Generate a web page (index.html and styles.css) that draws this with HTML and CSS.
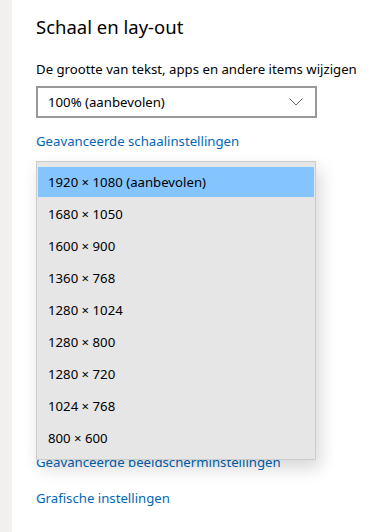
FILE: index.html
```html
<!DOCTYPE html>
<html lang="nl">
<head>
  <meta charset="UTF-8" />
  <meta name="viewport" content="width=device-width,initial-scale=1.0"/>
  <title>Beeldscherm</title>
  <link rel="stylesheet" href="styles.css">
</head>
<body>
  <div class="sidebar"></div>
  <div class="content">
    <h1>Schaal en lay-out</h1>
    <div class="field">
      <label>De grootte van tekst, apps en andere items wijzigen</label>
      <div class="select">
        <span>100% (aanbevolen)</span>
        <svg class="chevron" width="14" height="8" viewBox="0 0 14 8">
          <path d="M0.5 0.5 L7 7 L13.5 0.5" fill="none" stroke="#666" stroke-width="1"/>
        </svg>
      </div>
    </div>
    <a class="link" href="#">Geavanceerde schaalinstellingen</a>

    <!-- resolution dropdown is open, covering its label and box -->
    <div class="resolution">
      <div class="popup">
        <div class="item selected">1920 × 1080 (aanbevolen)</div>
        <div class="item">1680 × 1050</div>
        <div class="item">1600 × 900</div>
        <div class="item">1360 × 768</div>
        <div class="item">1280 × 1024</div>
        <div class="item">1280 × 800</div>
        <div class="item">1280 × 720</div>
        <div class="item">1024 × 768</div>
        <div class="item">800 × 600</div>
      </div>
    </div>

    <a class="link" href="#">Geavanceerde beeldscherminstellingen</a>
    <a class="link" href="#">Grafische instellingen</a>
  </div>
</body>
</html>
```

FILE: styles.css
```css
body {
  margin: 0;
  display: flex;
  min-height: 532px;
  font-family: "Noto Sans", sans-serif;
  background: #fff;
  color: #000;
}
.sidebar {
  width: 12px;
  background: #f2f0ef;
  flex-shrink: 0;
}
.content {
  padding: 13px 0 0 24px;
  display: flex;
  flex-direction: column;
  align-items: flex-start;
}
h1 {
  font-size: 18.5px;
  font-weight: normal;
  margin: 0 0 18px 0;
  line-height: 28px;
}
label {
  display: block;
  font-size: 13.2px;
  line-height: 20px;
}
.field label {
  margin-bottom: 7px;
}
.select {
  height: 28px;
  width: 255px;
  border: 2px solid #999;
  display: flex;
  align-items: center;
  justify-content: space-between;
  padding: 0 12px 0 10px;
  font-size: 13.2px;
}
.link {
  color: #0067b8;
  text-decoration: none;
  font-size: 13.2px;
  line-height: 20px;
  margin-top: 13px;
}
.resolution {
  position: relative;
  height: 298px;
  width: 280px;
  margin-top: 10px;
}
.popup {
  position: absolute;
  top: 0;
  left: 0;
  width: 276px;
  background: #e6e6e6;
  border: 1px solid #ccc;
  padding: 5px 1px 5px 1px;
  box-shadow: 4px 8px 16px rgba(0,0,0,0.16);
  z-index: 1;
}
.item {
  height: 32px;
  line-height: 32px;
  padding-left: 10px;
  font-size: 13.2px;
}
.item.selected {
  background: #84c5ff;
  height: 30px;
  line-height: 30px;
  margin-bottom: 1px;
}
.resolution + .link {
  margin-top: -7px;
}
.resolution + .link + .link {
  margin-top: 16px;
}
```
